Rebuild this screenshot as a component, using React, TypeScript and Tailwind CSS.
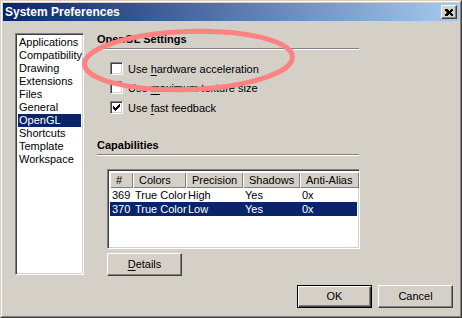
import React from "react";

const font = "font-['Liberation_Sans',Arial,sans-serif]";

// classic win9x bevels
const raised =
  "bg-[#d4d0c8] border border-t-white border-l-white border-r-[#404040] border-b-[#404040] shadow-[inset_-1px_-1px_0_#808080]";
const sunken =
  "border border-t-[#808080] border-l-[#808080] border-r-white border-b-white shadow-[inset_1px_1px_0_#404040,inset_-1px_-1px_0_#d4d0c8]";

const TICK = [
  "......X",
  ".....XX",
  "X...XXX",
  "XX.XXX.",
  "XXXXX..",
  ".XXX...",
  "..X....",
];

function Checkbox({ checked }: { checked?: boolean }) {
  return (
    <div className={`w-[13px] h-[13px] bg-white shrink-0 flex items-center justify-center ${sunken}`}>
      {checked && (
        <svg width="7" height="7" viewBox="0 0 7 7" shapeRendering="crispEdges">
          {TICK.map((row, y) =>
            row.split("").map((c, x) =>
              c === "X" ? <rect key={`${x}-${y}`} x={x} y={y} width="1" height="1" fill="#000" /> : null
            )
          )}
        </svg>
      )}
    </div>
  );
}

function CheckRow({ pre, u, post, checked, className = "" }: { pre: string; u: string; post: string; checked?: boolean; className?: string }) {
  return (
    <div className={`flex items-center h-[13px] ml-[13px] ${className}`}>
      <Checkbox checked={checked} />
      <span className="ml-[5px] text-[11px] leading-[14px] text-black whitespace-nowrap">
        {pre}
        <span className="underline underline-offset-[2px]">{u}</span>
        {post}
      </span>
    </div>
  );
}

function GroupHeader({ title, className = "" }: { title: string; className?: string }) {
  return (
    <div className={className}>
      <div className="text-[11px] leading-[14px] font-bold text-black">{title}</div>
      <div className="mt-[2px] h-[2px] w-[262px] border-t border-t-[#808080] border-b border-b-white" />
    </div>
  );
}

const items = [
  "Applications",
  "Compatibility",
  "Drawing",
  "Extensions",
  "Files",
  "General",
  "OpenGL",
  "Shortcuts",
  "Template",
  "Workspace",
];

const cols = [
  { name: "#", w: "w-[23px]" },
  { name: "Colors", w: "w-[53px]" },
  { name: "Precision", w: "w-[57px]" },
  { name: "Shadows", w: "w-[57px]" },
  { name: "Anti-Alias", w: "w-[59px]" },
];

const rows = [
  ["369", "True Color", "High", "Yes", "0x"],
  ["370", "True Color", "Low", "Yes", "0x"],
];

export default function App() {
  return (
    <div className={`relative w-[462px] h-[318px] bg-[#d4d0c8] ${font}`}>
      {/* window frame */}
      <div className="w-full h-full border border-t-[#d4d0c8] border-l-[#d4d0c8] border-r-[#404040] border-b-[#404040]">
        <div className="w-full h-full border border-t-white border-l-white border-r-[#808080] border-b-[#808080] p-px flex flex-col">
          {/* title bar */}
          <div className="h-[18px] flex items-center justify-between bg-[linear-gradient(to_right,#0a246a,#a6caf0)] pl-[2px] pr-[2px]">
            <span className="text-white font-bold text-[12px] leading-[18px] whitespace-nowrap">System Preferences</span>
            <div className={`w-[16px] h-[14px] flex items-center justify-center ${raised}`}>
              <svg width="8" height="7" viewBox="0 0 8 7" shapeRendering="crispEdges">
                <path d="M0 0h2l2 2 2-2h2v1L6 3.5 8 6v1H6L4 5 2 7H0V6l2-2.5L0 1z" fill="#000" />
              </svg>
            </div>
          </div>

          {/* body */}
          <div className="flex flex-1">
            {/* category list */}
            <div className={`mt-[12px] ml-[12px] w-[69px] h-[242px] bg-white p-[2px] ${sunken}`}>
              {items.map((it) => (
                <div
                  key={it}
                  className={`h-[13px] pl-px text-[11px] leading-[13px] whitespace-nowrap ${
                    it === "OpenGL" ? "bg-[#0a246a] text-white" : "text-black"
                  }`}
                >
                  {it}
                </div>
              ))}
            </div>

            {/* settings */}
            <div className="ml-[13px] w-[356px] flex flex-col">
              <GroupHeader title="OpenGL Settings" className="mt-[11px]" />
              <CheckRow pre="Use " u="h" post="ardware acceleration" className="mt-[12px]" />
              <CheckRow pre="Use " u="m" post="aximum texture size" className="mt-[6px]" />
              <CheckRow pre="Use " u="f" post="ast feedback" checked className="mt-[7px]" />

              <GroupHeader title="Capabilities" className="mt-[24px]" />

              {/* table */}
              <div className={`mt-[13px] ml-[10px] w-[253px] h-[80px] bg-white p-[2px] ${sunken}`}>
                <div className="flex h-[16px]">
                  {cols.map((c) => (
                    <div
                      key={c.name}
                      className={`${c.w} shrink-0 h-[16px] bg-[#d4d0c8] pl-[6px] text-[11px] leading-[16px] text-black whitespace-nowrap shadow-[inset_1px_1px_0_#fff,inset_-1px_-1px_0_#808080]`}
                    >
                      {c.name}
                    </div>
                  ))}
                </div>
                {rows.map((r, i) => (
                  <div key={i} className={`flex h-[14px] ${i === 1 ? "bg-[#0a246a] text-white" : "text-black"}`}>
                    {r.map((v, j) => (
                      <div
                        key={j}
                        className={`${cols[j].w} shrink-0 pl-[2px] text-[11px] leading-[14px] whitespace-nowrap`}
                      >
                        {v}
                      </div>
                    ))}
                  </div>
                ))}
              </div>

              <button
                className={`mt-[4px] ml-[10px] w-[75px] h-[23px] text-[11px] text-black flex items-center justify-center ${raised}`}
              >
                <span className="underline underline-offset-[2px]">D</span>etails
              </button>

              <div className="mt-[9px] flex justify-end gap-[6px]">
                <button className="w-[75px] h-[23px] border border-black">
                  <div className="w-full h-full text-[11px] text-black flex items-center justify-center shadow-[inset_1px_1px_0_#fff,inset_-1px_-1px_0_#404040,inset_-2px_-2px_0_#808080]">
                    OK
                  </div>
                </button>
                <button className={`w-[75px] h-[23px] text-[11px] text-black flex items-center justify-center ${raised}`}>
                  Cancel
                </button>
              </div>
            </div>
          </div>
        </div>
      </div>

      {/* red annotation ellipse drawn over the dialog */}
      <svg className="absolute left-0 top-0 pointer-events-none" width="462" height="318">
        <ellipse
          cx="188.5"
          cy="60.5"
          rx="104"
          ry="29"
          fill="none"
          stroke="#ff8282"
          strokeWidth="5"
          transform="rotate(-2 188.5 60.5)"
        />
      </svg>
    </div>
  );
}
